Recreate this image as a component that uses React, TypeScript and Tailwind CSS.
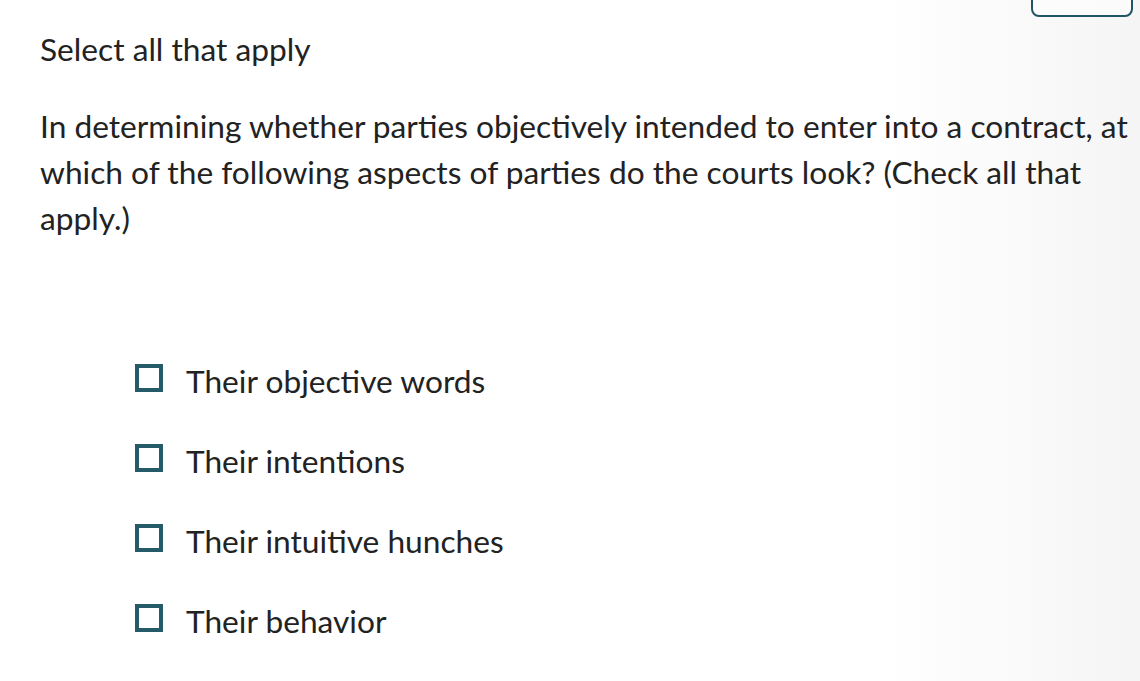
import React from 'react';

const options = [
  'Their objective words',
  'Their intentions',
  'Their intuitive hunches',
  'Their behavior',
];

export default function App() {
  return (
    <div
      className="relative w-[1140px] h-[681px] overflow-hidden bg-white text-[#222222]"
      style={{ fontFamily: 'Lato, "Open Sans", sans-serif' }}
    >
      {/* faint shadow on right edge */}
      <div className="absolute inset-y-0 right-0 w-[260px] bg-gradient-to-l from-[#f5f5f5] to-transparent pointer-events-none" />

      {/* cut-off button at top */}
      <div className="absolute right-[7px] top-[-20px] w-[102px] h-[37px] rounded-[8px] border-2 border-[#1f5564] bg-white/60" />

      <div className="relative pl-[40px] pr-[4px] pt-[30px]">
        <p className="text-[31.7px] leading-[38px]">Select all that apply</p>

        <p className="mt-[35px] text-[31.7px] leading-[46px] whitespace-nowrap">
          In determining whether parties objectively intended to enter into a contract, at
          <br />
          which of the following aspects of parties do the courts look? (Check all that
          <br />
          apply.)
        </p>

        <ul className="mt-[120px] ml-[95px] flex flex-col gap-[40px]">
          {options.map((o) => (
            <li key={o} className="flex items-center h-[40px]">
              <span className="w-[28px] h-[28px] -mt-[6px] border-[4px] border-[#255a69] shrink-0" />
              <span className="ml-[23px] text-[31.7px] leading-[40px]">{o}</span>
            </li>
          ))}
        </ul>
      </div>
    </div>
  );
}
